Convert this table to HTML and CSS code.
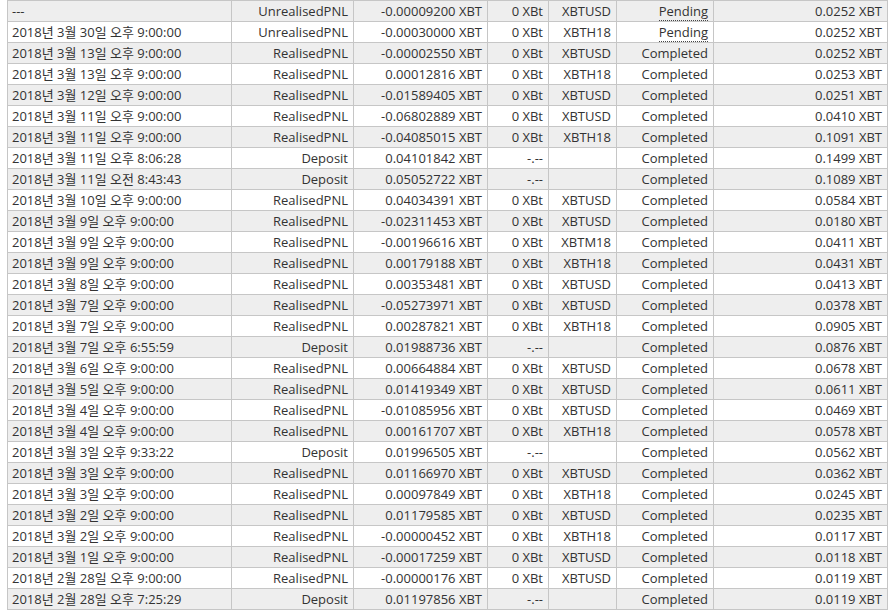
FILE: index.html
```html
<!DOCTYPE html>
<html>
<head>
<meta charset="utf-8">
<link rel="stylesheet" href="styles.css">
</head>
<body>
<table class="wallet">
<colgroup>
<col class="c-date"><col class="c-type"><col class="c-amt"><col class="c-fee"><col class="c-sym"><col class="c-status"><col class="c-bal">
</colgroup>
<tbody>
<tr><td class="l">---</td><td>UnrealisedPNL</td><td>-0.00009200 XBT</td><td>0 XBt</td><td>XBTUSD</td><td><span class="pend">Pending</span></td><td>0.0252 XBT</td></tr>
<tr><td class="l">2018년 3월 30일 오후 9:00:00</td><td>UnrealisedPNL</td><td>-0.00030000 XBT</td><td>0 XBt</td><td>XBTH18</td><td><span class="pend">Pending</span></td><td>0.0252 XBT</td></tr>
<tr><td class="l">2018년 3월 13일 오후 9:00:00</td><td>RealisedPNL</td><td>-0.00002550 XBT</td><td>0 XBt</td><td>XBTUSD</td><td>Completed</td><td>0.0252 XBT</td></tr>
<tr><td class="l">2018년 3월 13일 오후 9:00:00</td><td>RealisedPNL</td><td>0.00012816 XBT</td><td>0 XBt</td><td>XBTH18</td><td>Completed</td><td>0.0253 XBT</td></tr>
<tr><td class="l">2018년 3월 12일 오후 9:00:00</td><td>RealisedPNL</td><td>-0.01589405 XBT</td><td>0 XBt</td><td>XBTUSD</td><td>Completed</td><td>0.0251 XBT</td></tr>
<tr><td class="l">2018년 3월 11일 오후 9:00:00</td><td>RealisedPNL</td><td>-0.06802889 XBT</td><td>0 XBt</td><td>XBTUSD</td><td>Completed</td><td>0.0410 XBT</td></tr>
<tr><td class="l">2018년 3월 11일 오후 9:00:00</td><td>RealisedPNL</td><td>-0.04085015 XBT</td><td>0 XBt</td><td>XBTH18</td><td>Completed</td><td>0.1091 XBT</td></tr>
<tr><td class="l">2018년 3월 11일 오후 8:06:28</td><td>Deposit</td><td>0.04101842 XBT</td><td>-.--</td><td></td><td>Completed</td><td>0.1499 XBT</td></tr>
<tr><td class="l">2018년 3월 11일 오전 8:43:43</td><td>Deposit</td><td>0.05052722 XBT</td><td>-.--</td><td></td><td>Completed</td><td>0.1089 XBT</td></tr>
<tr><td class="l">2018년 3월 10일 오후 9:00:00</td><td>RealisedPNL</td><td>0.04034391 XBT</td><td>0 XBt</td><td>XBTUSD</td><td>Completed</td><td>0.0584 XBT</td></tr>
<tr><td class="l">2018년 3월 9일 오후 9:00:00</td><td>RealisedPNL</td><td>-0.02311453 XBT</td><td>0 XBt</td><td>XBTUSD</td><td>Completed</td><td>0.0180 XBT</td></tr>
<tr><td class="l">2018년 3월 9일 오후 9:00:00</td><td>RealisedPNL</td><td>-0.00196616 XBT</td><td>0 XBt</td><td>XBTM18</td><td>Completed</td><td>0.0411 XBT</td></tr>
<tr><td class="l">2018년 3월 9일 오후 9:00:00</td><td>RealisedPNL</td><td>0.00179188 XBT</td><td>0 XBt</td><td>XBTH18</td><td>Completed</td><td>0.0431 XBT</td></tr>
<tr><td class="l">2018년 3월 8일 오후 9:00:00</td><td>RealisedPNL</td><td>0.00353481 XBT</td><td>0 XBt</td><td>XBTUSD</td><td>Completed</td><td>0.0413 XBT</td></tr>
<tr><td class="l">2018년 3월 7일 오후 9:00:00</td><td>RealisedPNL</td><td>-0.05273971 XBT</td><td>0 XBt</td><td>XBTUSD</td><td>Completed</td><td>0.0378 XBT</td></tr>
<tr><td class="l">2018년 3월 7일 오후 9:00:00</td><td>RealisedPNL</td><td>0.00287821 XBT</td><td>0 XBt</td><td>XBTH18</td><td>Completed</td><td>0.0905 XBT</td></tr>
<tr><td class="l">2018년 3월 7일 오후 6:55:59</td><td>Deposit</td><td>0.01988736 XBT</td><td>-.--</td><td></td><td>Completed</td><td>0.0876 XBT</td></tr>
<tr><td class="l">2018년 3월 6일 오후 9:00:00</td><td>RealisedPNL</td><td>0.00664884 XBT</td><td>0 XBt</td><td>XBTUSD</td><td>Completed</td><td>0.0678 XBT</td></tr>
<tr><td class="l">2018년 3월 5일 오후 9:00:00</td><td>RealisedPNL</td><td>0.01419349 XBT</td><td>0 XBt</td><td>XBTUSD</td><td>Completed</td><td>0.0611 XBT</td></tr>
<tr><td class="l">2018년 3월 4일 오후 9:00:00</td><td>RealisedPNL</td><td>-0.01085956 XBT</td><td>0 XBt</td><td>XBTUSD</td><td>Completed</td><td>0.0469 XBT</td></tr>
<tr><td class="l">2018년 3월 4일 오후 9:00:00</td><td>RealisedPNL</td><td>0.00161707 XBT</td><td>0 XBt</td><td>XBTH18</td><td>Completed</td><td>0.0578 XBT</td></tr>
<tr><td class="l">2018년 3월 3일 오후 9:33:22</td><td>Deposit</td><td>0.01996505 XBT</td><td>-.--</td><td></td><td>Completed</td><td>0.0562 XBT</td></tr>
<tr><td class="l">2018년 3월 3일 오후 9:00:00</td><td>RealisedPNL</td><td>0.01166970 XBT</td><td>0 XBt</td><td>XBTUSD</td><td>Completed</td><td>0.0362 XBT</td></tr>
<tr><td class="l">2018년 3월 3일 오후 9:00:00</td><td>RealisedPNL</td><td>0.00097849 XBT</td><td>0 XBt</td><td>XBTH18</td><td>Completed</td><td>0.0245 XBT</td></tr>
<tr><td class="l">2018년 3월 2일 오후 9:00:00</td><td>RealisedPNL</td><td>0.01179585 XBT</td><td>0 XBt</td><td>XBTUSD</td><td>Completed</td><td>0.0235 XBT</td></tr>
<tr><td class="l">2018년 3월 2일 오후 9:00:00</td><td>RealisedPNL</td><td>-0.00000452 XBT</td><td>0 XBt</td><td>XBTH18</td><td>Completed</td><td>0.0117 XBT</td></tr>
<tr><td class="l">2018년 3월 1일 오후 9:00:00</td><td>RealisedPNL</td><td>-0.00017259 XBT</td><td>0 XBt</td><td>XBTUSD</td><td>Completed</td><td>0.0118 XBT</td></tr>
<tr><td class="l">2018년 2월 28일 오후 9:00:00</td><td>RealisedPNL</td><td>-0.00000176 XBT</td><td>0 XBt</td><td>XBTUSD</td><td>Completed</td><td>0.0119 XBT</td></tr>
<tr><td class="l">2018년 2월 28일 오후 7:25:29</td><td>Deposit</td><td>0.01197856 XBT</td><td>-.--</td><td></td><td>Completed</td><td>0.0119 XBT</td></tr>
</tbody>
</table>
</body>
</html>
```
FILE: styles.css
```css
html, body {
  margin: 0;
  padding: 0;
  background: #ffffff;
}
body {
  padding-left: 7px;
  font-family: "Open Sans", "Noto Sans CJK KR", sans-serif;
  font-size: 13px;
  color: #333333;
}
.wallet {
  border-collapse: collapse;
  table-layout: fixed;
  width: 880px;
}
.c-date { width: 224px; }
.c-type { width: 122px; }
.c-amt { width: 134px; }
.c-fee { width: 61px; }
.c-sym { width: 68px; }
.c-status { width: 97px; }
.c-bal { width: 174px; }
.wallet td {
  border: 1px solid #c6c6c6;
  height: 20px;
  padding: 0 5px 0 4px;
  line-height: 19px;
  text-align: right;
  white-space: nowrap;
}
.wallet td.l {
  text-align: left;
}
.wallet tr:nth-child(odd) td {
  background: #eeeeee;
}
.pend {
  border-bottom: 1px dotted #444;
}
```
